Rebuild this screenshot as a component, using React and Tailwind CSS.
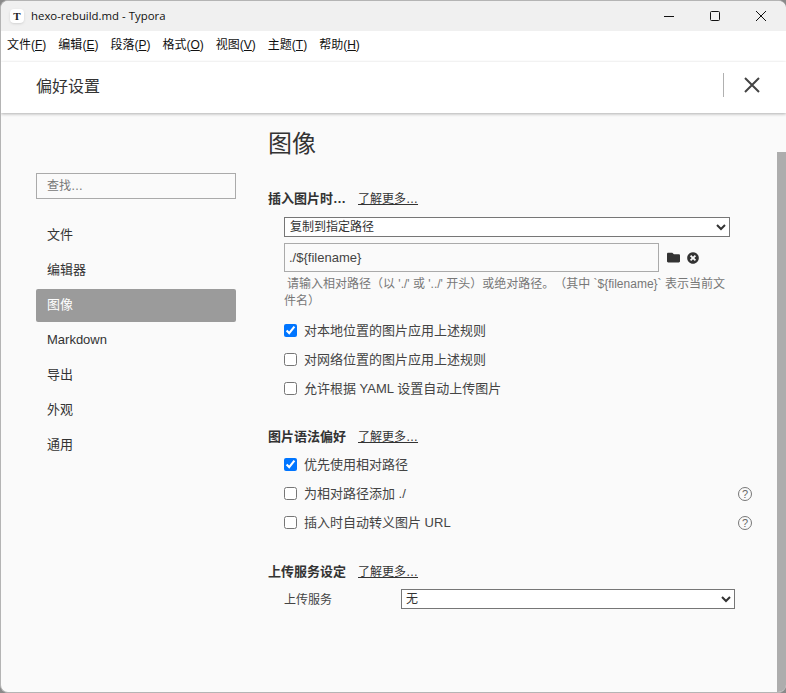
import React from "react";
import { FaFolder, FaTimesCircle } from "react-icons/fa";

const sans = { fontFamily: '"Liberation Sans","Noto Sans CJK SC",sans-serif' };

const menus = [
  ["文件", "F"], ["编辑", "E"], ["段落", "P"], ["格式", "O"], ["视图", "V"], ["主题", "T"], ["帮助", "H"],
];
const nav = ["文件", "编辑器", "图像", "Markdown", "导出", "外观", "通用"];

function Heading({ children }) {
  return (
    <div className="flex items-center h-[18px] text-[13px] text-[#333]">
      <span className="font-bold">{children}</span>
      <a className="ml-[12px] underline text-[12px] text-[#333]">了解更多…</a>
    </div>
  );
}

function Check({ label, checked, help }) {
  return (
    <div className="flex items-center h-[29px] pl-[16px] pr-[25px] text-[13px] text-[#444]">
      <input type="checkbox" defaultChecked={checked} className="w-[13px] h-[13px] m-0 mr-[7px]" />
      <span className="flex-1">{label}</span>
      {help && (
        <span className="w-[14px] h-[14px] rounded-full border border-[#777] text-[#666] text-[11px] leading-[12px] text-center">?</span>
      )}
    </div>
  );
}

export default function App() {
  return (
    <div style={sans} className="w-[786px] h-[693px] bg-[#8a8a8a] overflow-hidden">
      <div className="w-full h-full flex flex-col rounded-lg overflow-hidden border border-[#b4b4b4] border-r-0 bg-[#fafafa]">
        {/* title bar */}
        <div className="flex items-center h-[30px] shrink-0 bg-[#f0f0f0] pl-[9px] pr-[2px]">
          <span className="w-[14px] h-[14px] rounded-sm bg-white text-[11px] font-bold text-[#222] text-center leading-[14px] shadow-sm" style={{ fontFamily: '"Liberation Serif",serif' }}>T</span>
          <span className="ml-[7px] text-[11.4px] text-[#111] flex-1" style={{ fontFamily: '"Open Sans",sans-serif' }}>hexo-rebuild.md - Typora</span>
          <div className="flex items-center">
            <svg width="46" height="30" viewBox="0 0 46 30"><path d="M18 15.5h10" stroke="#111" strokeWidth="1" /></svg>
            <svg width="46" height="30" viewBox="0 0 46 30"><rect x="18.5" y="10.5" width="9" height="9" rx="1" fill="none" stroke="#111" strokeWidth="1" /></svg>
            <svg width="46" height="30" viewBox="0 0 46 30"><path d="M18 10l10 10M28 10L18 20" stroke="#111" strokeWidth="1" /></svg>
          </div>
        </div>
        {/* menu */}
        <div className="flex items-center h-[31px] shrink-0 bg-white pl-[6px] pb-[3px] gap-[12px] text-[12px] text-[#111]">
          {menus.map(([t, k]) => (
            <span key={k}>{t}(<span className="underline">{k}</span>)</span>
          ))}
        </div>
        {/* preferences header */}
        <div className="relative flex items-center h-[51px] shrink-0 bg-white pl-[35px] pr-[26px] pb-[5px] shadow-[0_1px_3px_rgba(0,0,0,0.3)]">
          <span className="flex-1 text-[16px] text-[#333] pt-[3px]">偏好设置</span>
          <span className="w-px h-[24px] bg-[#b0b0b0] mr-[20px]" />
          <svg width="16" height="16" viewBox="0 0 16 16"><path d="M1 1l14 14M15 1L1 15" stroke="#444" strokeWidth="2" /></svg>
        </div>
        {/* body */}
        <div className="flex flex-1 min-h-0">
          <aside className="w-[267px] shrink-0 pl-[35px] pt-[60px]">
            <div className="w-[200px] h-[26px] border border-[#aaa] pl-[10px] flex items-center text-[12px] text-[#777]">查找…</div>
            <div className="mt-[20px] w-[200px] flex flex-col gap-[2px]">
              {nav.map((n) => (
                <div key={n} className={`h-[33px] flex items-center pl-[11px] pb-[2px] text-[13px] rounded-[2px] ${n === "图像" ? "bg-[#9b9b9b] text-white" : "text-[#333]"}`}>{n}</div>
              ))}
            </div>
          </aside>
          <main className="flex-1 min-w-0 pt-[16px]">
            <h1 className="text-[24px] leading-[30px] text-[#333]">图像</h1>
            <div className="mt-[31px]"><Heading>插入图片时…</Heading></div>
            <div className="pl-[16px] mt-[9px]">
              <select className="block w-[446px] h-[20px] bg-white border border-[#767676] text-[12px] text-[#333] pl-[1px]">
                <option>复制到指定路径</option>
              </select>
              <div className="flex items-center mt-[6px]">
                <div className="w-[375px] h-[29px] border border-[#aaa] bg-[#fafafa] flex items-center pl-[4px] text-[13px] text-[#444]">./{"${filename}"}</div>
                <FaFolder className="ml-[8px] text-[#333]" size={13} />
                <FaTimesCircle className="ml-[7px] text-[#333]" size={12} />
              </div>
              <p className="mt-[4px] w-[448px] indent-[3px] text-[12px] leading-[17px] text-[#777] [text-spacing-trim:space-all]">
                请输入相对路径（以 './' 或 '../' 开头）或绝对路径。（其中 `${"{filename}"}` 表示当前文件名）
              </p>
            </div>
            <div className="mt-[6px]">
              <Check label="对本地位置的图片应用上述规则" checked />
              <Check label="对网络位置的图片应用上述规则" />
              <Check label="允许根据 YAML 设置自动上传图片" />
            </div>
            <div className="mt-[25px]"><Heading>图片语法偏好</Heading></div>
            <div className="mt-[4px]">
              <Check label="优先使用相对路径" checked />
              <Check label="为相对路径添加 ./" help />
              <Check label="插入时自动转义图片 URL" help />
            </div>
            <div className="mt-[26px]"><Heading>上传服务设定</Heading></div>
            <div className="flex items-center mt-[8px] pl-[16px] text-[12px] text-[#444]">
              <span className="w-[117px] pt-[1px]">上传服务</span>
              <select className="w-[334px] h-[20px] bg-white border border-[#767676] text-[12px] text-[#333] pl-0">
                <option>无</option>
              </select>
            </div>
          </main>
          <div className="w-[9px] shrink-0 mt-[39px] bg-[#adadad]" />
        </div>
      </div>
    </div>
  );
}
